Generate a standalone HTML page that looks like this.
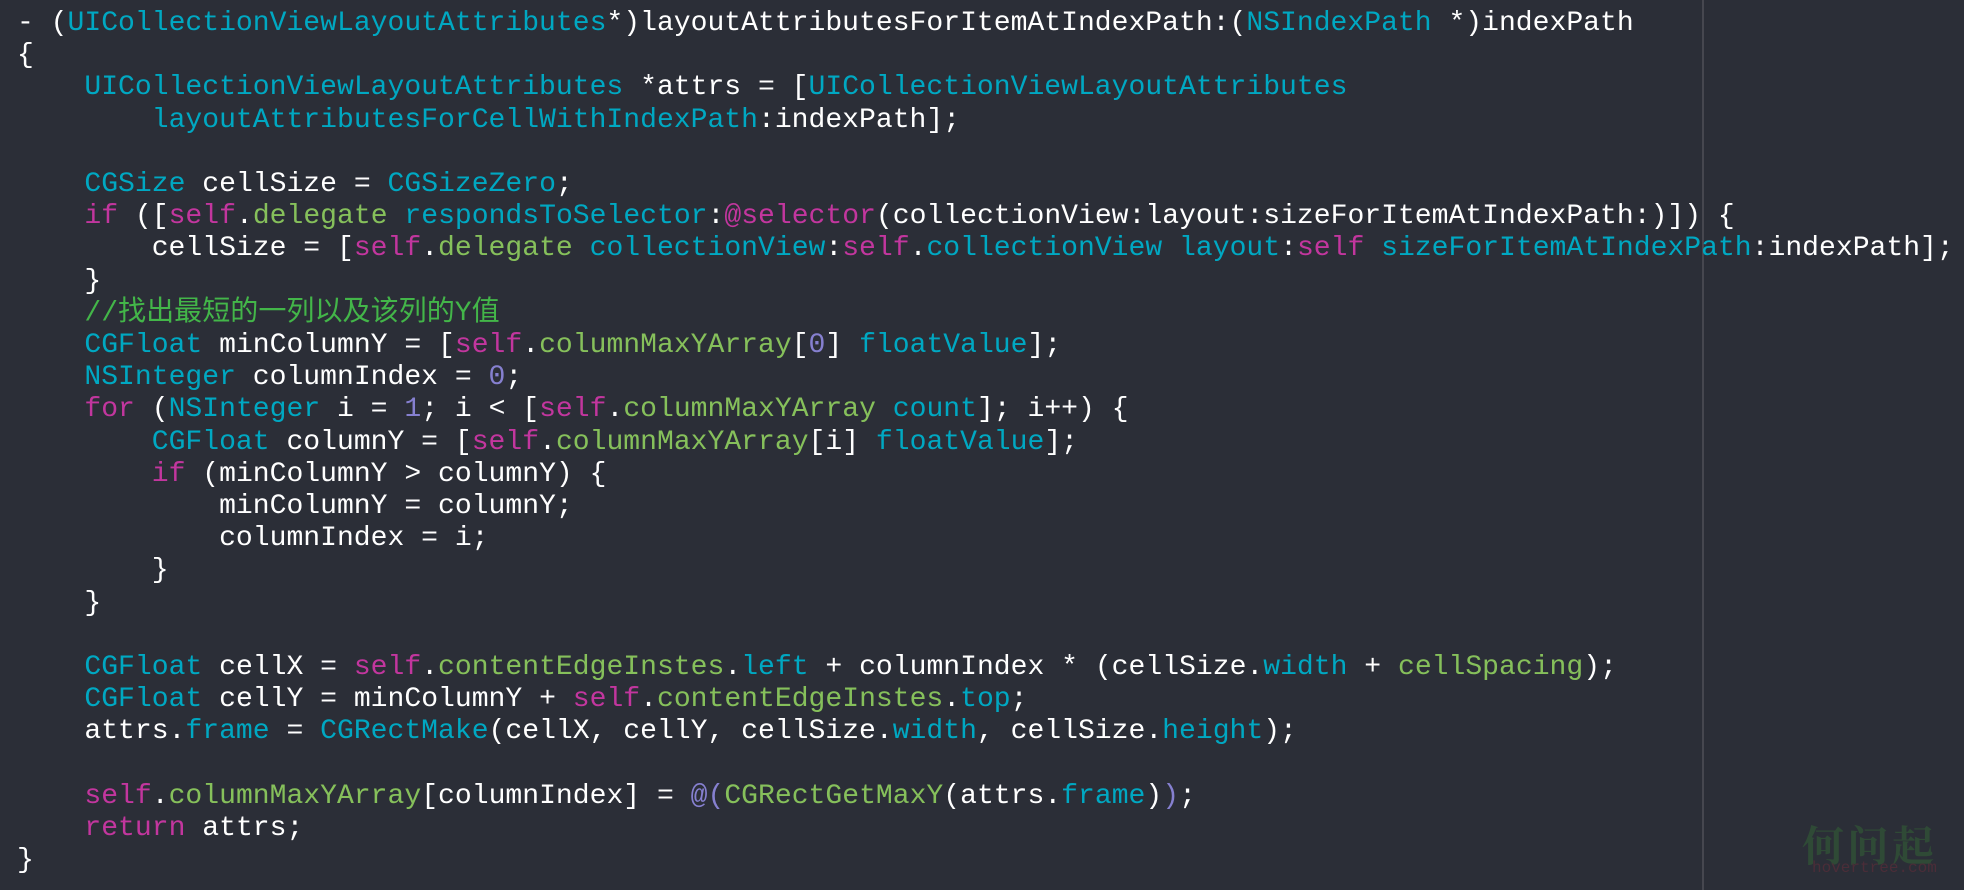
<!DOCTYPE html>
<html><head><meta charset="utf-8"><style>
html,body{margin:0;padding:0;width:1964px;height:890px;background:#2b2e37;overflow:hidden}
pre{margin:0;position:absolute;left:17px;top:8px;font-family:"Liberation Mono","Noto Sans CJK SC",monospace;font-size:28.07px;line-height:32.2px;color:#ffffff}
.c{color:#00a8c2}.p{color:#c2369e}.g{color:#86c05b}.n{color:#8680d0}.m{color:#43b649}
.vl{position:absolute;left:1702px;top:0;width:2px;height:890px;background:#46474f}
.wm{position:absolute;left:1802px;top:816px;font-family:"Noto Serif CJK SC","WenQuanYi Zen Hei",serif;font-size:42px;font-weight:bold;color:#2f4a36;letter-spacing:3px;line-height:56px}
.wm2{position:absolute;left:1812px;top:858px;font-family:"Liberation Mono",monospace;font-size:16px;color:#4b2d38;line-height:20px}
</style></head><body>
<div class="vl"></div>
<pre>- (<span class="c">UICollectionViewLayoutAttributes</span>*)layoutAttributesForItemAtIndexPath:(<span class="c">NSIndexPath</span> *)indexPath
{
    <span class="c">UICollectionViewLayoutAttributes</span> *attrs = [<span class="c">UICollectionViewLayoutAttributes</span>
        <span class="c">layoutAttributesForCellWithIndexPath</span>:indexPath];

    <span class="c">CGSize</span> cellSize = <span class="c">CGSizeZero</span>;
    <span class="p">if</span> ([<span class="p">self</span>.<span class="g">delegate</span> <span class="c">respondsToSelector</span>:<span class="p">@selector</span>(collectionView:layout:sizeForItemAtIndexPath:)]) {
        cellSize = [<span class="p">self</span>.<span class="g">delegate</span> <span class="c">collectionView</span>:<span class="p">self</span>.<span class="c">collectionView</span> <span class="c">layout</span>:<span class="p">self</span> <span class="c">sizeForItemAtIndexPath</span>:indexPath];
    }
    <span class="m">//找出最短的一列以及该列的Y值</span>
    <span class="c">CGFloat</span> minColumnY = [<span class="p">self</span>.<span class="g">columnMaxYArray</span>[<span class="n">0</span>] <span class="c">floatValue</span>];
    <span class="c">NSInteger</span> columnIndex = <span class="n">0</span>;
    <span class="p">for</span> (<span class="c">NSInteger</span> i = <span class="n">1</span>; i &lt; [<span class="p">self</span>.<span class="g">columnMaxYArray</span> <span class="c">count</span>]; i++) {
        <span class="c">CGFloat</span> columnY = [<span class="p">self</span>.<span class="g">columnMaxYArray</span>[i] <span class="c">floatValue</span>];
        <span class="p">if</span> (minColumnY &gt; columnY) {
            minColumnY = columnY;
            columnIndex = i;
        }
    }

    <span class="c">CGFloat</span> cellX = <span class="p">self</span>.<span class="g">contentEdgeInstes</span>.<span class="c">left</span> + columnIndex * (cellSize.<span class="c">width</span> + <span class="g">cellSpacing</span>);
    <span class="c">CGFloat</span> cellY = minColumnY + <span class="p">self</span>.<span class="g">contentEdgeInstes</span>.<span class="c">top</span>;
    attrs.<span class="c">frame</span> = <span class="c">CGRectMake</span>(cellX, cellY, cellSize.<span class="c">width</span>, cellSize.<span class="c">height</span>);

    <span class="p">self</span>.<span class="g">columnMaxYArray</span>[columnIndex] = <span class="n">@(</span><span class="g">CGRectGetMaxY</span>(attrs.<span class="c">frame</span>)<span class="n">)</span>;
    <span class="p">return</span> attrs;
}</pre>
<div class="wm">何问起</div>
<div class="wm2">hovertree.com</div>
</body></html>
